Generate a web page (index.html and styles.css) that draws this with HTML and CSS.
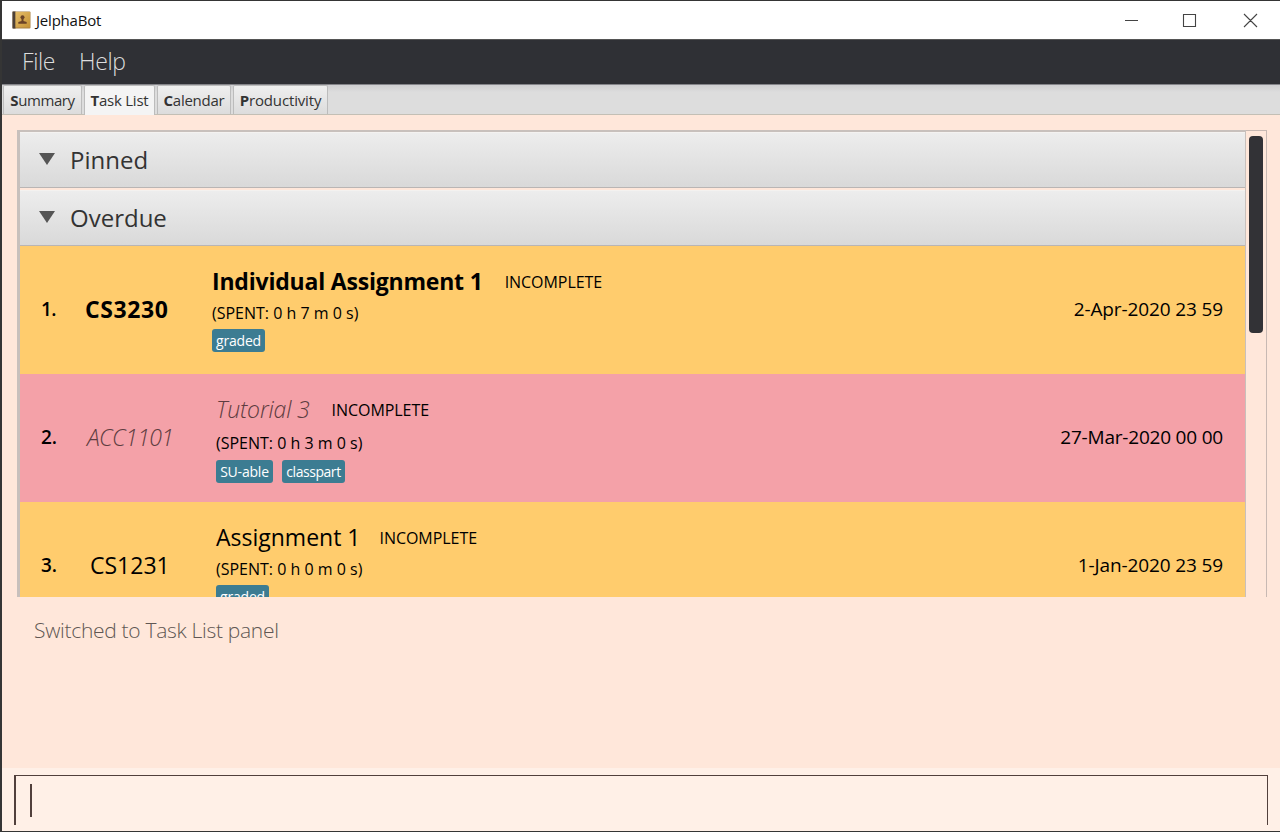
FILE: index.html
```html
<!DOCTYPE html>
<html lang="en">
<head>
<meta charset="utf-8">
<title>JelphaBot</title>
<link rel="stylesheet" href="styles.css">
</head>
<body>
<div class="window">
  <header class="titlebar">
    <svg class="app-icon" width="19" height="18" viewBox="0 0 19 18">
      <defs><linearGradient id="book" x1="0" y1="0" x2="1" y2="1"><stop offset="0" stop-color="#e6bd69"/><stop offset="1" stop-color="#c49235"/></linearGradient></defs>
      <rect x=".5" y=".5" width="18" height="17" rx="1" fill="#a98245"/>
      <rect x=".5" y=".5" width="3" height="17" fill="#4c4038"/>
      <rect x="3.5" y="1" width="14.5" height="15.5" fill="url(#book)"/>
      <circle cx="10.5" cy="6.3" r="2" fill="#6b4327"/>
      <path d="M9.5 8h2v2l3.2 1v1.8H6.3V11l3.2-1z" fill="#6b4327"/>
    </svg>
    <span class="app-name">JelphaBot</span>
    <svg class="controls" width="136" height="16" viewBox="0 0 136 16" fill="none" stroke="#444" stroke-width="1.1">
      <path d="M3 8.5h13M61.5 2.5h12v12h-12zM122 2l13 13M135 2l-13 13"/>
    </svg>
  </header>
  <nav class="menu"><span>File</span><span>Help</span></nav>
  <div class="tabs">
    <div class="tab tab-summary"><b>S</b>ummary</div>
    <div class="tab tab-tasks active"><b>T</b>ask List</div>
    <div class="tab tab-calendar"><b>C</b>alendar</div>
    <div class="tab tab-productivity"><b>P</b>roductivity</div>
  </div>
  <main class="scroll-pane">
    <div class="list">
      <h2 class="group"><i class="arrow"></i>Pinned</h2>
      <h2 class="group"><i class="arrow"></i>Overdue</h2>
      <article class="task strong">
        <span class="num">1.</span>
        <span class="code">CS3230</span>
        <div class="details">
          <div class="heading"><span class="name">Individual Assignment 1</span><span class="status">INCOMPLETE</span></div>
          <div class="spent">(SPENT: 0 h 7 m 0 s)</div>
          <div class="tags"><span class="tag graded">graded</span></div>
        </div>
        <time>2-Apr-2020 23 59</time>
      </article>
      <article class="task light">
        <span class="num">2.</span>
        <span class="code">ACC1101</span>
        <div class="details">
          <div class="heading"><span class="name">Tutorial 3</span><span class="status">INCOMPLETE</span></div>
          <div class="spent">(SPENT: 0 h 3 m 0 s)</div>
          <div class="tags"><span class="tag su">SU-able</span><span class="tag classpart">classpart</span></div>
        </div>
        <time>27-Mar-2020 00 00</time>
      </article>
      <article class="task normal">
        <span class="num">3.</span>
        <span class="code">CS1231</span>
        <div class="details">
          <div class="heading"><span class="name">Assignment 1</span><span class="status">INCOMPLETE</span></div>
          <div class="spent">(SPENT: 0 h 0 m 0 s)</div>
          <div class="tags"><span class="tag graded">graded</span></div>
        </div>
        <time>1-Jan-2020 23 59</time>
      </article>
    </div>
    <div class="scrollbar"><div class="thumb"></div></div>
  </main>
  <section class="result">Switched to Task List panel</section>
  <footer class="command"><div class="input"><i class="caret"></i></div></footer>
</div>
</body>
</html>
```
FILE: styles.css
```css
* { box-sizing: border-box; }
body { margin: 0; width: 1280px; height: 832px; overflow: hidden; background: #353535; font-family: "Open Sans", "Noto Sans", sans-serif; white-space: nowrap; }
.window { display: flex; flex-direction: column; height: 832px; padding: 1px 0 1px 2px; }
.titlebar { display: flex; align-items: center; height: 38px; background: #fff; padding: 0 22px 0 10px; font-size: 15px; color: #111; }
.app-name { margin-left: 5px; letter-spacing: -0.2px; }
.controls { margin-left: auto; }
.menu { display: flex; align-items: center; gap: 24px; height: 45px; padding: 0 20px 2px; background: #2f3035; border-top: 1px solid #555; color: #ddd; font-size: 23px; font-weight: 300; letter-spacing: -0.4px; }
.tabs { display: flex; gap: 2px; height: 31px; padding: 0 1px; background: linear-gradient(#cfcfd1, #dddddd 25%); border-top: 1px solid #85858a; border-bottom: 1px solid #c3bfb5; }
.tab { display: flex; align-items: center; justify-content: center; padding-bottom: 1px; background: linear-gradient(#efefef, #dcdcdc); border: 1px solid #bcbcbc; border-bottom: 0; border-radius: 2px 2px 0 0; font-size: 15px; letter-spacing: -0.25px; color: #333; }
.tab.active { background: #f4f4f4; margin-bottom: -1px; }
.tab-summary { width: 79px; letter-spacing: -0.4px; }
.tab-tasks { width: 71px; }
.tab-calendar { width: 74px; }
.tab-productivity { width: 95px; letter-spacing: -0.15px; }
.scroll-pane { display: flex; height: 482px; padding: 15px 13px 0 15px; background: #ffe7da; }
.list { width: 1229px; height: 467px; overflow: hidden; border: 1px solid #c8c0bc; border-width: 2px 1px 0 3px; }
.group { display: flex; align-items: center; height: 56px; margin: 0 0 2px; padding: 0 19px 2px; background: linear-gradient(#ededed, #d9d9d9); border-top: 1px solid #f4f2f0; border-bottom: 1px solid #b9b5b4; font-size: 24px; font-weight: 400; color: #333; }
.group + .group { margin-bottom: 0; }
.arrow { width: 0; height: 0; margin-right: 15px; border: 8.5px solid transparent; border-top: 12px solid #555; border-bottom: 0; }
.task { display: flex; height: 128px; background: #ffcc6d; color: #000; }
.task.light { background: #f4a1a8; }
.num { width: 65px; padding: 49px 0 0 21px; font-size: 19px; line-height: 28px; font-weight: 600; }
.strong .num { letter-spacing: -0.5px; }
.code { width: 127px; padding: 48px 0 0; font-size: 23px; line-height: 30px; }
.details { flex: 1; padding: 20px 0 0 4px; }
.heading { display: flex; align-items: center; height: 32px; font-size: 23px; }
.name { position: relative; top: -1px; }
.status { font-size: 16px; margin-left: 22px; letter-spacing: -0.05px; }
.spent { height: 31px; font-size: 16px; line-height: 30px; }
.tags { display: flex; gap: 9px; }
.tag { display: flex; align-items: center; justify-content: center; height: 23px; border-radius: 3px; background: #3c7c92; color: #fff; font-size: 14px; letter-spacing: -0.2px; }
.graded { width: 53px; }
.su { width: 57px; }
.classpart { width: 63px; letter-spacing: -0.45px; }
time { padding: 49px 22px 0 0; font-size: 19px; line-height: 28px; letter-spacing: -0.12px; }
.strong .details { padding-left: 0; }
.strong .code, .strong .name { font-weight: 700; }
.strong .code { letter-spacing: 0.6px; }
.strong .name { letter-spacing: -0.2px; }
.light .code, .light .name { font-weight: 300; font-style: italic; color: #5d3c40; }
.light .code { padding-left: 2px; letter-spacing: -0.6px; }
.light .name { letter-spacing: -0.15px; }
.light .spent { height: 34px; line-height: 34px; }
.light time { letter-spacing: -0.2px; }
.normal .code { padding-left: 5px; }
.normal .status { margin-left: 19px; }
.scrollbar { width: 21px; border: 1px solid #c8b9b3; border-width: 1px 1px 0 0; padding: 5px 0 0 3px; }
.thumb { width: 14px; height: 197px; border-radius: 4px; background: #323236; }
.result { flex: 1; background: #ffe7da; padding: 17px 32px; font-size: 21px; line-height: 32px; font-weight: 350; letter-spacing: -0.3px; color: #605753; }
.command { height: 63px; padding: 7px 12px 6px; background: #fff0e7; }
.input { height: 50px; border: 2px solid #51403c; border-width: 1px 1px 0 2px; padding: 8px 14px; }
.caret { display: block; width: 2px; height: 33px; background: #51403c; }
```
